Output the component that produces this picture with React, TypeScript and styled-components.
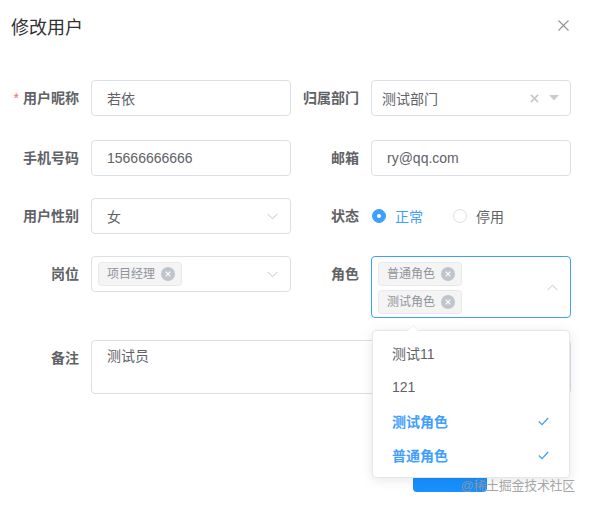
import React from "react";
import styled, { createGlobalStyle } from "styled-components";

const Global = createGlobalStyle`
  html, body { margin: 0; padding: 0; background: #fff; }
  body { font-family: "Liberation Sans", "Noto Sans CJK SC", sans-serif; }
`;

const Dialog = styled.div`
  position: relative;
  width: 589px;
  height: 507px;
  overflow: hidden;
  background: #fff;
  font-family: "Liberation Sans", "Noto Sans CJK SC", sans-serif;
`;

const Header = styled.div`
  display: flex;
  align-items: center;
  justify-content: space-between;
  padding: 16px 20px 0 11px;
  height: 24px;
`;

const Title = styled.span`
  font-size: 18px;
  line-height: 24px;
  color: #303133;
`;

const CloseBtn = styled.span`
  display: flex;
  width: 12px;
  height: 12px;
  align-items: center;
  justify-content: center;
  margin-top: -6px;
`;

const Form = styled.div`
  padding: 40px 0 0 11px;
`;

const FormRow = styled.div`
  display: flex;
  align-items: flex-start;
  margin-bottom: 22px;
  &:first-child { margin-bottom: 24px; }
`;

const FormItem = styled.div<{ $full?: boolean }>`
  display: flex;
  align-items: flex-start;
  width: ${(p) => (p.$full ? 560 : 280)}px;
`;

const Label = styled.label`
  width: 80px;
  flex: none;
  box-sizing: border-box;
  padding-right: 12px;
  text-align: right;
  line-height: 36px;
  font-size: 14px;
  font-weight: 700;
  color: #606266;
`;

const Star = styled.span`
  color: #f56c6c;
  margin-right: 4px;
  font-weight: 400;
`;

const Field = styled.div<{ $focus?: boolean; $pad?: number; $h?: number }>`
  position: relative;
  width: 200px;
  height: ${(p) => p.$h ?? 36}px;
  box-sizing: border-box;
  border: 1px solid ${(p) => (p.$focus ? "#409eff" : "#dcdfe6")};
  border-radius: 4px;
  display: flex;
  align-items: center;
  padding: 0 ${(p) => p.$pad ?? 15}px;
  font-size: 14px;
  color: #606266;
  background: #fff;
`;

const Value = styled.span`
  flex: 1;
  white-space: nowrap;
`;

const SuffixIcon = styled.span`
  position: absolute;
  right: 5px;
  top: 0;
  bottom: 0;
  width: 25px;
  display: flex;
  align-items: center;
  justify-content: center;
`;

const TreeIcons = styled.span`
  display: flex;
  align-items: center;
  gap: 10px;
  margin-right: 1px;
`;

const Tags = styled.div<{ $column?: boolean }>`
  display: flex;
  flex-direction: ${(p) => (p.$column ? "column" : "row")};
  align-items: flex-start;
  flex: 1;
  margin-left: -9px;
  padding-top: ${(p) => (p.$column ? 1 : 0)}px;
`;

const Tag = styled.span`
  display: inline-flex;
  align-items: center;
  height: 24px;
  box-sizing: border-box;
  margin: 2px 0 2px 0;
  padding: 0 6px 0 8px;
  background: #f4f4f5;
  border: 1px solid #e9e9eb;
  border-radius: 4px;
  color: #909399;
  font-size: 12px;
  line-height: 22px;
`;

const TagClose = styled.span`
  display: inline-flex;
  align-items: center;
  justify-content: center;
  width: 14px;
  height: 14px;
  border-radius: 50%;
  background: #c0c4cc;
  margin-left: 6px;
`;

const RadioGroup = styled.div`
  display: flex;
  align-items: center;
  height: 36px;
  padding-left: 1px;
`;

const Radio = styled.span<{ $on?: boolean }>`
  display: flex;
  align-items: center;
  margin-right: 30px;
  font-size: 14px;
  color: ${(p) => (p.$on ? "#409eff" : "#606266")};
`;

const RadioDot = styled.span<{ $on?: boolean }>`
  width: 14px;
  height: 14px;
  box-sizing: border-box;
  border-radius: 50%;
  border: 1px solid ${(p) => (p.$on ? "#409eff" : "#dcdfe6")};
  background: ${(p) => (p.$on ? "#409eff" : "#fff")};
  display: flex;
  align-items: center;
  justify-content: center;
  margin-right: 9px;
  &::after {
    content: "";
    width: 4px;
    height: 4px;
    border-radius: 50%;
    background: #fff;
    display: ${(p) => (p.$on ? "block" : "none")};
  }
`;

const TextArea = styled.div`
  width: 480px;
  height: 54px;
  box-sizing: border-box;
  border: 1px solid #dcdfe6;
  border-radius: 4px;
  padding: 5px 15px;
  font-size: 14px;
  line-height: 21px;
  color: #606266;
`;

const Footer = styled.div`
  display: flex;
  justify-content: flex-end;
  padding: 40px 102px 0 0;
`;

const PrimaryButton = styled.button`
  width: 74px;
  height: 36px;
  padding: 0 0 14px;
  border: none;
  border-radius: 4px;
  background: #1890ff;
  color: #fff;
  font-size: 14px;
  line-height: 14px;
  font-family: inherit;
`;

const Dropdown = styled.div`
  position: absolute;
  top: calc(100% + 13px);
  left: 0px;
  width: 198px;
  box-sizing: border-box;
  padding: 5px 0;
  background: #fff;
  border: 1px solid #e4e7ed;
  border-radius: 4px;
  box-shadow: 0 2px 12px 0 rgba(0, 0, 0, 0.1);
  z-index: 10;
  &::before {
    content: "";
    position: absolute;
    top: -12px;
    left: 34px;
    border: 6px solid transparent;
    border-bottom-color: #ebeef5;
  }
  &::after {
    content: "";
    position: absolute;
    top: -11px;
    left: 34px;
    border: 6px solid transparent;
    border-bottom-color: #fff;
  }
`;

const Option = styled.div<{ $sel?: boolean }>`
  display: flex;
  align-items: center;
  justify-content: space-between;
  height: 34px;
  padding: 0 20px 0 19px;
  font-size: 14px;
  color: ${(p) => (p.$sel ? "#409eff" : "#606266")};
  font-weight: ${(p) => (p.$sel ? 700 : 400)};
`;

const Watermark = styled.span`
  position: absolute;
  right: 14px;
  bottom: 13px;
  font-size: 13px;
  line-height: 16px;
  color: rgba(150, 150, 150, 0.85);
  letter-spacing: -0.3px;
  z-index: 20;
`;

const ChevronDown = () => (
  <svg width="11" height="7" viewBox="0 0 11 7">
    <polyline points="0.5,0.8 5.5,5.8 10.5,0.8" fill="none" stroke="#c0c4cc" strokeWidth="1" />
  </svg>
);

const ChevronUp = () => (
  <svg width="11" height="7" viewBox="0 0 11 7">
    <polyline points="0.5,6.2 5.5,1.2 10.5,6.2" fill="none" stroke="#c0c4cc" strokeWidth="1" />
  </svg>
);

const SmallX = ({ c = "#fff", s = 6 }: { c?: string; s?: number }) => (
  <svg width={s} height={s} viewBox="0 0 10 10">
    <path d="M1 1L9 9M9 1L1 9" stroke={c} strokeWidth="1.8" />
  </svg>
);

const Check = () => (
  <svg width="11" height="9" viewBox="0 0 11 9">
    <polyline points="0.8,4.5 4,7.6 10.2,1" fill="none" stroke="#409eff" strokeWidth="1.3" />
  </svg>
);

const TagItem = ({ text }: { text: string }) => (
  <Tag>
    {text}
    <TagClose>
      <SmallX />
    </TagClose>
  </Tag>
);

export default function App() {
  return (
    <Dialog>
      <Global />
      <Header>
        <Title>修改用户</Title>
        <CloseBtn>
          <svg width="11" height="11" viewBox="0 0 11 11">
            <path d="M0.5 0.5L10.5 10.5M10.5 0.5L0.5 10.5" stroke="#909399" strokeWidth="1.1" />
          </svg>
        </CloseBtn>
      </Header>
      <Form>
        <FormRow>
          <FormItem>
            <Label>
              <Star>*</Star>用户昵称
            </Label>
            <Field>
              <Value>若依</Value>
            </Field>
          </FormItem>
          <FormItem>
            <Label>归属部门</Label>
            <Field $pad={10}>
              <Value>测试部门</Value>
              <TreeIcons>
                <SmallX c="#c8c8c8" s={9} />
                <svg width="10" height="6" viewBox="0 0 10 6">
                  <polygon points="0,0 10,0 5,5.5" fill="#cccccc" />
                </svg>
              </TreeIcons>
            </Field>
          </FormItem>
        </FormRow>
        <FormRow>
          <FormItem>
            <Label>手机号码</Label>
            <Field>
              <Value>15666666666</Value>
            </Field>
          </FormItem>
          <FormItem>
            <Label>邮箱</Label>
            <Field>
              <Value>ry@qq.com</Value>
            </Field>
          </FormItem>
        </FormRow>
        <FormRow>
          <FormItem>
            <Label>用户性别</Label>
            <Field>
              <Value>女</Value>
              <SuffixIcon>
                <ChevronDown />
              </SuffixIcon>
            </Field>
          </FormItem>
          <FormItem>
            <Label>状态</Label>
            <RadioGroup>
              <Radio $on>
                <RadioDot $on />
                正常
              </Radio>
              <Radio>
                <RadioDot />
                停用
              </Radio>
            </RadioGroup>
          </FormItem>
        </FormRow>
        <FormRow>
          <FormItem>
            <Label>岗位</Label>
            <Field>
              <Tags>
                <TagItem text="项目经理" />
              </Tags>
              <SuffixIcon>
                <ChevronDown />
              </SuffixIcon>
            </Field>
          </FormItem>
          <FormItem>
            <Label>角色</Label>
            <Field $focus $h={62}>
              <Tags $column>
                <TagItem text="普通角色" />
                <TagItem text="测试角色" />
              </Tags>
              <SuffixIcon>
                <ChevronUp />
              </SuffixIcon>
              <Dropdown>
                <Option>测试11</Option>
                <Option>121</Option>
                <Option $sel>
                  测试角色
                  <Check />
                </Option>
                <Option $sel>
                  普通角色
                  <Check />
                </Option>
              </Dropdown>
            </Field>
          </FormItem>
        </FormRow>
        <FormRow>
          <FormItem $full>
            <Label>备注</Label>
            <TextArea>测试员</TextArea>
          </FormItem>
        </FormRow>
      </Form>
      <Footer>
        <PrimaryButton>确 定</PrimaryButton>
      </Footer>
      <Watermark>@稀土掘金技术社区</Watermark>
    </Dialog>
  );
}
